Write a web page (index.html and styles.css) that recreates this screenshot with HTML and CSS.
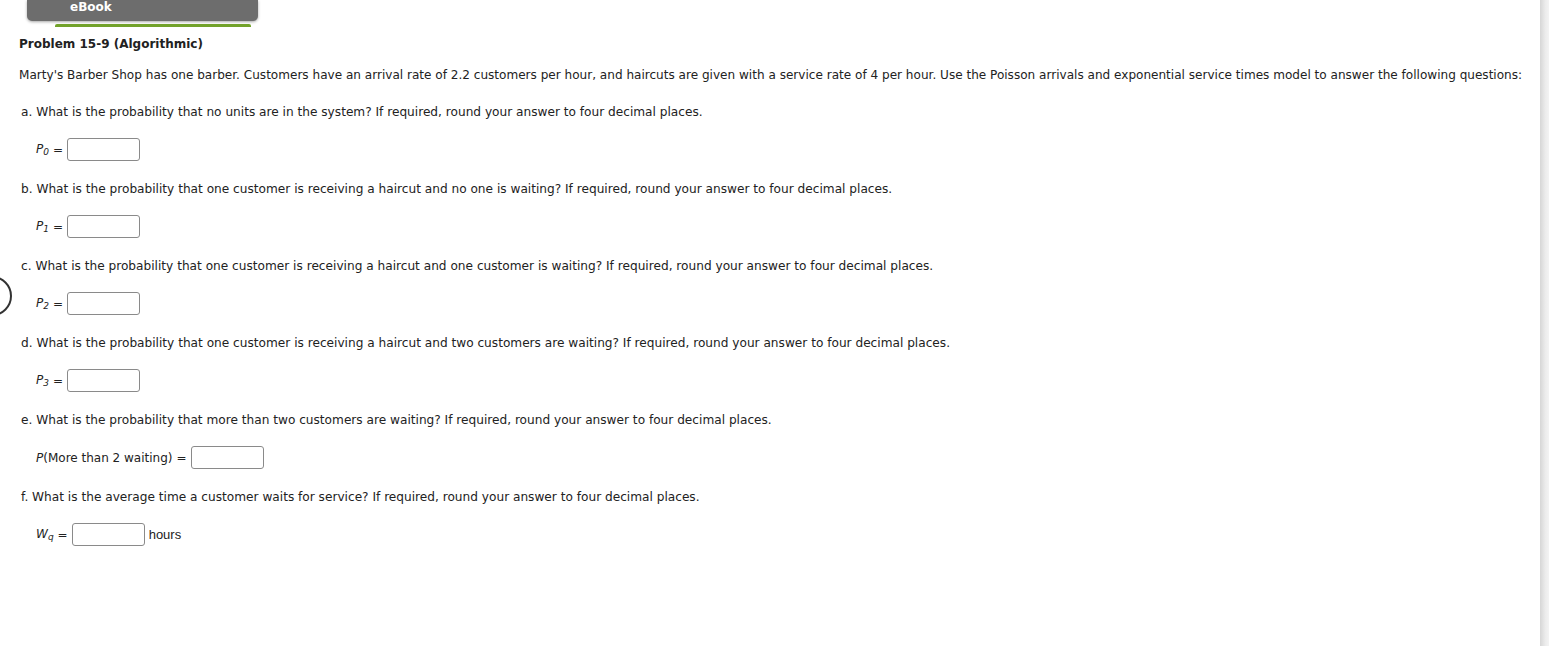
FILE: index.html
```html
<!DOCTYPE html>
<html>
<head>
<meta charset="utf-8">
<link rel="stylesheet" href="styles.css">
</head>
<body>
<div class="page">
  <main class="main">
    <div class="tabbar">
      <div class="tab">eBook</div>
      <div class="tab-line"></div>
    </div>
    <div class="content">
      <h1 class="title">Problem 15-9 (Algorithmic)</h1>
      <p class="intro">Marty's Barber Shop has one barber. Customers have an arrival rate of 2.2 customers per hour, and haircuts are given with a service rate of 4 per hour. Use the Poisson arrivals and exponential service times model to answer the following questions:</p>

      <p class="q">a. What is the probability that no units are in the system? If required, round your answer to four decimal places.</p>
      <div class="ans"><span class="lbl"><i>P</i><sub><i>0</i></sub></span><span class="eq">=</span><span class="box"></span></div>

      <p class="q">b. What is the probability that one customer is receiving a haircut and no one is waiting? If required, round your answer to four decimal places.</p>
      <div class="ans"><span class="lbl"><i>P</i><sub><i>1</i></sub></span><span class="eq">=</span><span class="box"></span></div>

      <p class="q">c. What is the probability that one customer is receiving a haircut and one customer is waiting? If required, round your answer to four decimal places.</p>
      <div class="ans"><span class="lbl"><i>P</i><sub><i>2</i></sub></span><span class="eq">=</span><span class="box"></span></div>

      <p class="q">d. What is the probability that one customer is receiving a haircut and two customers are waiting? If required, round your answer to four decimal places.</p>
      <div class="ans"><span class="lbl"><i>P</i><sub><i>3</i></sub></span><span class="eq">=</span><span class="box"></span></div>

      <p class="q">e. What is the probability that more than two customers are waiting? If required, round your answer to four decimal places.</p>
      <div class="ans"><span class="lbl"><i>P</i>(More than 2 waiting)</span><span class="eq">=</span><span class="box"></span></div>

      <p class="q">f. What is the average time a customer waits for service? If required, round your answer to four decimal places.</p>
      <div class="ans"><span class="lbl"><i>W</i><sub><i>q</i></sub></span><span class="eq">=</span><span class="box"></span><span class="unit">hours</span></div>
    </div>
    <div class="side-circle"></div>
  </main>
  <div class="scroll-edge"></div>
</div>
</body>
</html>
```
FILE: styles.css
```css
html, body {
  margin: 0;
  padding: 0;
  background: #fff;
}
body {
  font-family: "DejaVu Sans", Verdana, sans-serif;
  font-size: 12.15px;
  color: #222;
}
.page {
  display: flex;
  height: 646px;
  overflow: hidden;
}
.main {
  flex: 1;
  position: relative;
}
.scroll-edge {
  width: 9px;
  height: 646px;
  background: linear-gradient(to right, #d6d6d6, #ececec 60%, #f3f3f3);
}
.tabbar {
  padding-left: 27px;
}
.tab {
  width: 231px;
  height: 21px;
  box-sizing: border-box;
  background: #6d6d6d;
  border-radius: 0 0 5px 5px;
  box-shadow: 0 1px 3px rgba(0,0,0,0.35);
  color: #fff;
  font-weight: bold;
  font-size: 12px;
  padding-left: 43px;
  line-height: 14px;
}
.tab-line {
  margin-left: 28px;
  margin-top: 3px;
  width: 196px;
  height: 3px;
  background: #72a22a;
  border-radius: 2px 2px 0 0;
}
.content {
  padding-left: 19px;
}
.title {
  margin: 9px 0 0;
  font-size: 12px;
  font-weight: bold;
  line-height: 16px;
  color: #222;
}
.intro {
  margin: 15px 0 0;
  font-size: 12.07px;
  line-height: 16px;
}
.q {
  margin: 21px 0 0 2px;
  line-height: 16px;
}
.ans {
  display: flex;
  align-items: center;
  margin: 18px 0 0 17px;
  height: 23px;
  color: #222;
}
.ans + .q {
  margin-top: 20px;
}
.lbl {
  font-size: 12px;
}
.lbl sub {
  font-size: 9px;
  vertical-align: -2px;
}
.eq {
  margin: 0 4px 0 4px;
  font-size: 12px;
}
.box {
  width: 71px;
  height: 21px;
  border: 1px solid #8a8a8a;
  border-radius: 3px;
  background: #fff;
}
.unit {
  margin-left: 4px;
  font-family: "Liberation Sans", Arial, sans-serif;
  font-size: 13px;
}
.side-circle {
  position: absolute;
  left: -28px;
  top: 276px;
  width: 36px;
  height: 36px;
  border: 2.5px solid #333;
  border-radius: 50%;
}
```
